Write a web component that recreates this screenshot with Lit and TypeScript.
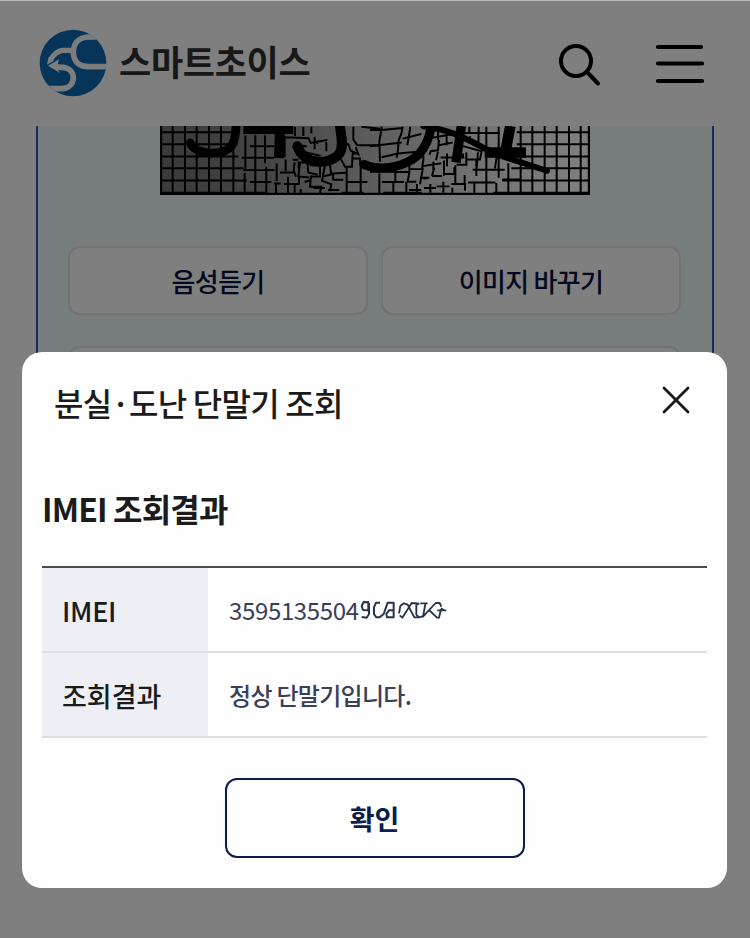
import { LitElement, html, css, svg } from "lit";
import { customElement } from "lit/decorators.js";

@customElement("site-header")
class SiteHeader extends LitElement {
  static styles = css`
    :host { display: flex; align-items: center; height: 126px; box-sizing: border-box; padding: 0 46px 0 39px; background: #fff; }
    .logo { width: 68px; height: 68px; flex: none; }
    .name { margin-left: 12px; margin-bottom: 4px; font-size: 35px; line-height: 50px; letter-spacing: -0.3px; font-weight: 700; color: #303030; white-space: nowrap; flex: 1; }
    .search { width: 44px; height: 44px; margin: 3px 52px 0 0; }
    .menu { width: 50px; height: 44px; margin-top: 2px; }
  `;
  render() {
    return html`
      <svg class="logo" viewBox="0 0 204 204">
        <defs><clipPath id="disc"><circle cx="102" cy="102" r="100" /></clipPath></defs>
        <circle cx="102" cy="102" r="100" fill="#0d6bb3" />
        <g clip-path="url(#disc)" fill="none" stroke="#fbfbfb" stroke-width="17">
          <path d="M178 24H148C118 25 103 45 103 71C104 98 122 113 148 113H206" />
          <path d="M103 64H72C54 65 43 78 34 93" stroke-width="16" />
          <path d="M52 115H72C92 117 103 131 103 147C102 166 88 179 68 179H24" />
          <path d="M27 110L60 91L56 106L68 107V123H56L64 133Z" fill="#fbfbfb" stroke="none" />
          <path d="M24 107L29 84L45 95Z" fill="#fbfbfb" stroke="none" />
        </g>
      </svg>
      <div class="name">스마트초이스</div>
      <svg class="search" viewBox="0 0 44 44" fill="none" stroke="#000" stroke-width="4" stroke-linecap="round">
        <circle cx="18" cy="18" r="15" /><path d="M29.5 29.5L40 40.5" />
      </svg>
      <svg class="menu" viewBox="0 0 50 44" stroke="#000" stroke-width="4.2" stroke-linecap="round">
        <path d="M4 5H47M4 21.5H48M4 39H48" />
      </svg>
    `;
  }
}

@customElement("captcha-image")
class CaptchaImage extends LitElement {
  static styles = css`
    :host { display: block; width: 430px; height: 69px; }
    .art { display: block; width: 430px; height: 69px; }
  `;
  render() {
    const left = [68, 105, 140, 177, 213, 250];
    const right = [1112, 1147, 1184, 1220, 1257, 1292];
    const rows = [52, 88, 125, 160, 197];
    return html`
      <svg class="art" viewBox="30 33 1290 208" preserveAspectRatio="none">
        <defs>
          <linearGradient id="shade">
            <stop offset="0" stop-color="#747474" /><stop offset=".25" stop-color="#8a8a8a" />
            <stop offset=".5" stop-color="#bcbcbc" /><stop offset=".75" stop-color="#e8e8e8" /><stop offset="1" stop-color="#fff" />
          </linearGradient>
        </defs>
        <rect x="30" y="33" width="1290" height="208" fill="url(#shade)" />
        <g fill="none" stroke="#000" stroke-width="6">
          ${left.map((x) => svg`<path d=${`M${x} 33V236`} />`)}
          ${right.map((x) => svg`<path d=${`M${x} 33V236`} />`)}
          ${rows.map((y, i) => svg`<path d=${`M30 ${y}H${[250, 262, 265, 280, 290][i]}M${[1100, 1100, 1100, 1084, 1056][i]} ${y}H1316`} />`)}
          <path d="M286 62V165M284 175V236" />
          <g transform="translate(300 21)">
            <path d="M16 40V215M45 40V124M49 135V215M80 125V178M78 185V215M0 73H72M-25 108H72M-20 145H74M0 181H64M72 185H92" />
            <path d="M104 42V106M104 46L176 49L182 63L232 54M194 45V82M135 14V42M160 14V42M184 14V34M144 59L138 80M134 68L170 74M205 55L201 66M168 92L212 102M229 60V88" />
            <path d="M107 113V148M90 152H130M134 122L131 146L138 165M114 165V215M102 187H148M150 121L145 164L178 167M146 139V122H172L175 153L203 158M128 114H145M147 188V164M134 213V188" />
            <path d="M180 130H210V164H183L180 195H213L210 215M152 202V215M190 199H225M225 130L216 177L244 188L240 208M239 124L244 158L218 164M248 174H280M249 174V155L290 153M234 205H268M183 175L164 181" />
            <path d="M273 112L285 135H306L308 95L324 94M290 135V215M332 132V213M288 181H352M276 62L295 67L302 86L325 97L317 76M310 14V53L322 70H390M334 14L390 20M304 110H330L331 130" />
          </g>
          <g transform="translate(660 21)">
            <path d="M35 14L32 35L28 58L30 120M0 73L95 62M0 24H35L98 18M28 155V215M76 130V181M36 181H102M70 181V213M0 150H76M98 14L94 35L86 55L84 84L80 108M120 14V22L112 70M35 106L84 95L160 88" />
            <path d="M76 151H118L113 180H139M118 151V131M98 50L154 36M118 142H158L150 187M160 90V114L156 144M150 168H178M175 168L160 171M141 187V213M117 205H154M162 199H198M181 187V213M109 180V213" />
            <path d="M158 133L214 124M190 119V145M193 137L186 163M186 163H216M204 89L198 115M178 99L182 88L204 85L207 53M178 49L246 37M204 55V24M200 194H238M220 180V213M222 116V162M222 157H253V136M231 95V133M212 107H280L278 95M207 70L248 62M230 36V70" />
            <path d="M289 92V129H260M256 130V187M244 187H285V207M284 160V184M247 198V213M289 113H330L335 88L276 72M296 64L301 43M325 78L326 14M294 182H376M313 182V213M308 144H404M319 116V163M349 14V215M386 14V168M324 91L320 140M298 14V34M280 33H390M379 184V213M415 124V213M397 173H450M380 106L375 140" />
          </g>
          <path d="M33 33V238H1317V33" stroke-width="7" />
          <path d="M30 236H345M575 236H640M700 236H815M1030 236H1316" stroke-width="9" />
        </g>
        <g fill="none" stroke="#000" stroke-linecap="round">
          <path d="M121 84C135 118 205 123 237 101C253 89 257 65 258 33" stroke-width="26" />
          <path d="M280 42H430M390 38L387 130" stroke-width="30" stroke-linecap="butt" />
          <path d="M442 94C465 158 545 148 568 116C584 92 572 62 570 33" stroke-width="30" />
          <path d="M642 149C695 172 764 156 806 119C826 97 836 75 845 30" stroke-width="27" />
          <path d="M934 33L918 143" stroke-width="28" stroke-linecap="butt" />
          <path d="M1081 33L1067 106M1004 113H1128" stroke-width="32" stroke-linecap="butt" />
          <path d="M820 34C930 48 972 90 1050 122L1191 168" stroke-width="18" />
        </g>
      </svg>
    `;
  }
}

@customElement("page-panel")
class PagePanel extends LitElement {
  static styles = css`
    :host { display: flex; flex-direction: column; align-items: center; width: 678px; height: 500px; margin-left: 36px; box-sizing: border-box; border: 2px solid #2d56c2; border-top: 0; background: #eff8fa; }
    .frame { margin-right: 1px; }
    .row { display: flex; gap: 13px; margin: 51px 1px 0 0; width: 613px; }
    .btn { flex: 1; height: 69px; box-sizing: border-box; border: 2px solid #e6e4e5; border-radius: 12px; background: #fff; color: #06133f; font-size: 26px; font-weight: 500; line-height: 65px; letter-spacing: -0.7px; text-align: center; white-space: nowrap; }
    .field { width: 613px; height: 69px; margin: 31px 1px 0 0; box-sizing: border-box; border: 2px solid #e6e4e5; border-radius: 12px; background: #fff; }
  `;
  render() {
    return html`
      <captcha-image class="frame"></captcha-image>
      <div class="row"><div class="btn">음성듣기</div><div class="btn">이미지 바꾸기</div></div>
      <div class="field"></div>
    `;
  }
}

@customElement("result-dialog")
class ResultDialog extends LitElement {
  static styles = css`
    :host { display: flex; flex-direction: column; width: 705px; height: 536px; box-sizing: border-box; padding: 0 20px; border-radius: 20px; background: #fefefe; color: #1b1b1b; }
    .top { display: flex; justify-content: space-between; height: 104px; padding: 0 16px 0 12px; }
    .title { font-size: 32px; font-weight: 500; line-height: 46px; margin-top: 27px; letter-spacing: -0.75px; white-space: nowrap; }
    .close { width: 30px; height: 30px; margin-top: 33px; }
    .heading { font-size: 32px; font-weight: 700; line-height: 46px; margin-top: 29px; letter-spacing: -0.85px; white-space: nowrap; }
    .table { margin-top: 35px; border-top: 2px solid #4b4b4d; }
    .line { display: flex; height: 83px; border-bottom: 2px solid #dedede; }
    .key { width: 146px; padding-left: 20px; background: #eeeff4; font-size: 27px; font-weight: 500; line-height: 85px; white-space: nowrap; }
    .latin { letter-spacing: -0.3px; }
    .value { display: flex; align-items: center; padding-left: 21px; font-size: 24px; line-height: 83px; color: #3a3f59; white-space: nowrap; }
    .number { letter-spacing: -0.35px; }
    .message { letter-spacing: -0.7px; font-weight: 500; }
    .scribble { width: 90px; height: 24px; }
    .ok { align-self: center; width: 300px; height: 80px; box-sizing: border-box; margin-top: 40px; border: 2px solid #0a1c4c; border-radius: 12px; color: #0b1d4d; font-size: 27px; font-weight: 700; line-height: 77px; text-align: center; }
  `;
  render() {
    return html`
      <div class="top">
        <div class="title">분실·도난 단말기 조회</div>
        <svg class="close" viewBox="0 0 30 30" stroke="#1b1b1b" stroke-width="2.8" stroke-linecap="round"><path d="M3 3L27 27M27 3L3 27" /></svg>
      </div>
      <div class="heading">IMEI 조회결과</div>
      <div class="table">
        <div class="line">
          <div class="key latin">IMEI</div>
          <div class="value"><span class="number">3595135504</span>
            <svg class="scribble" viewBox="0 0 270 72" fill="none" stroke="#26354a" stroke-width="6" stroke-linejoin="round">
              <path d="M30 13L14 12L8 24L12 36L28 37V14M30 14V48L23 59L8 57M63 14H51L45 28V48L52 58L62 58L74 48L86 14H104V58H84L82 48L90 37H103" />
              <path d="M122 52L130 59L158 15L176 16M120 46L124 24L134 16L146 20L166 58L178 58M181 16L172 20V50L180 58L190 55M184 16H206M199 18L192 56L230 15H242L247 26M210 36L234 59H240L246 34M235 37H262M246 31L254 36" stroke-width="5.5" />
            </svg>
          </div>
        </div>
        <div class="line"><div class="key">조회결과</div><div class="value message">정상 단말기입니다.</div></div>
      </div>
      <div class="ok">확인</div>
    `;
  }
}

@customElement("app-root")
class AppRoot extends LitElement {
  static styles = css`
    :host { display: block; position: relative; width: 750px; height: 938px; overflow: hidden; background: #fff; font-family: "Noto Sans CJK KR", "Noto Sans", sans-serif; }
    .overlay { position: absolute; inset: 0; display: flex; flex-direction: column; box-sizing: border-box; padding: 351px 0 0 22px; border-top: 1px solid #b6bab9; background: rgba(0, 0, 0, 0.5); }
  `;
  render() {
    return html`
      <site-header></site-header>
      <page-panel></page-panel>
      <div class="overlay"><result-dialog></result-dialog></div>
    `;
  }
}
